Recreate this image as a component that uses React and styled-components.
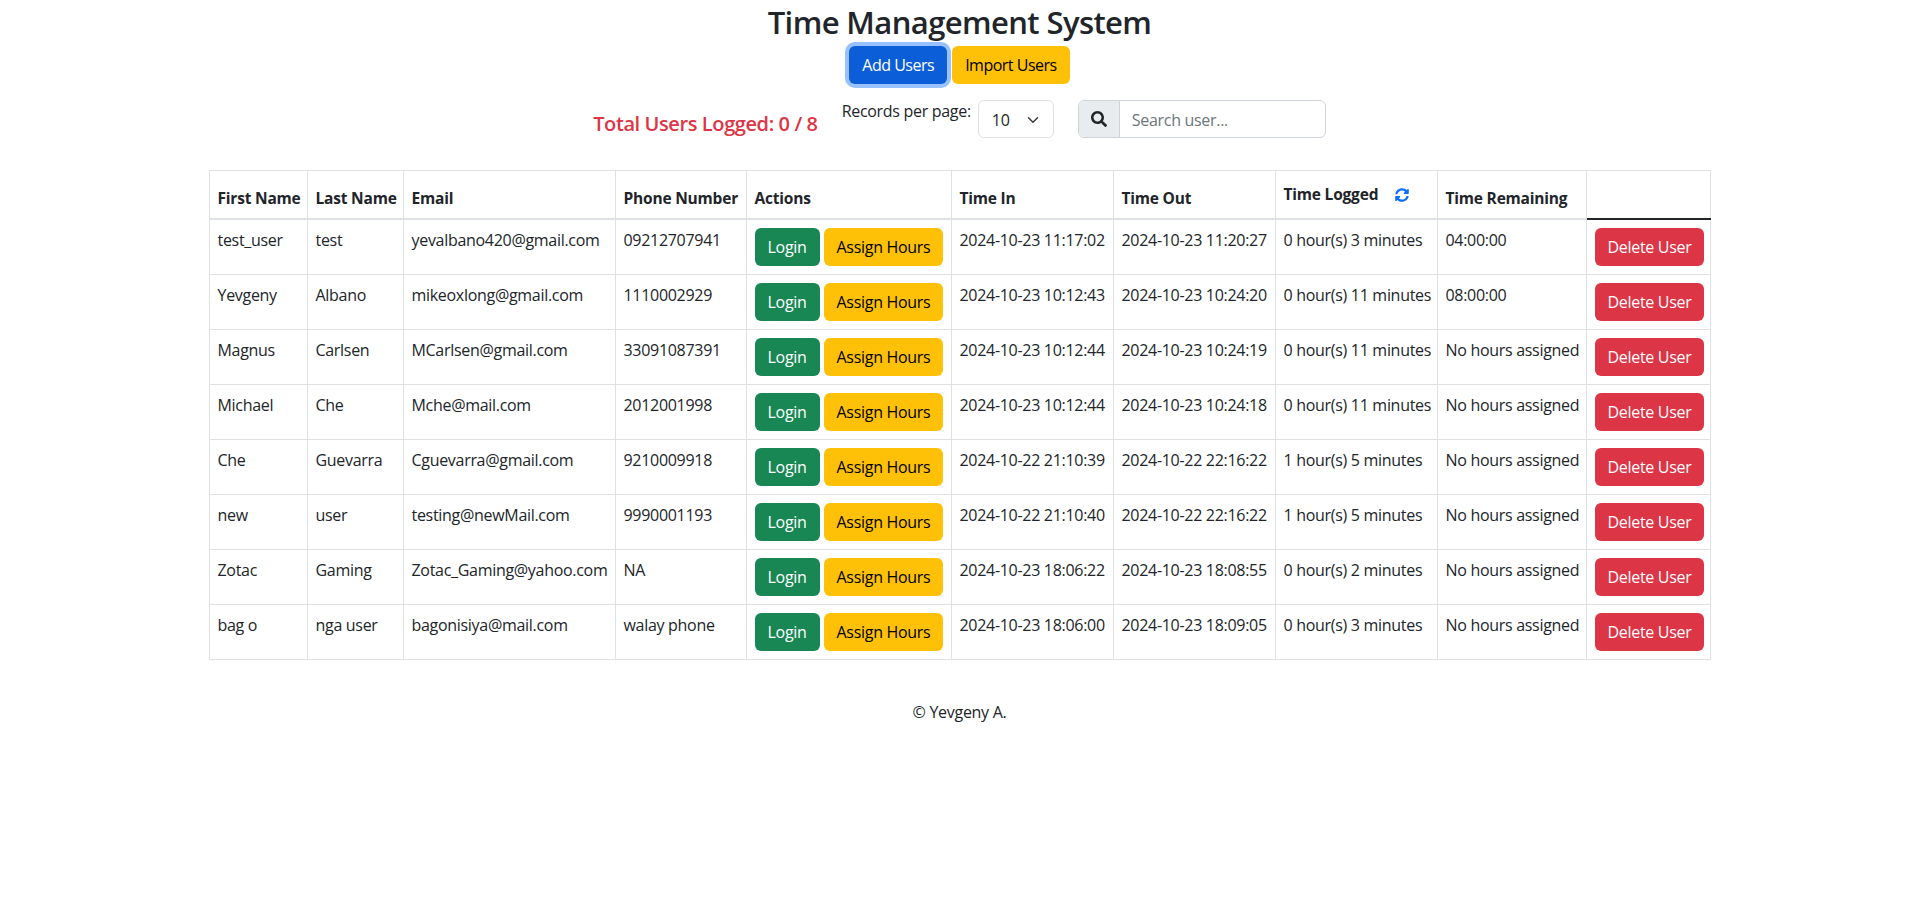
import React from "react";
import styled, { createGlobalStyle } from "styled-components";
import { FaSearch, FaSyncAlt } from "react-icons/fa";

const users = [
  ["test_user", "test", "yevalbano420@gmail.com", "09212707941", "2024-10-23 11:17:02", "2024-10-23 11:20:27", "0 hour(s) 3 minutes", "04:00:00"],
  ["Yevgeny", "Albano", "mikeoxlong@gmail.com", "1110002929", "2024-10-23 10:12:43", "2024-10-23 10:24:20", "0 hour(s) 11 minutes", "08:00:00"],
  ["Magnus", "Carlsen", "MCarlsen@gmail.com", "33091087391", "2024-10-23 10:12:44", "2024-10-23 10:24:19", "0 hour(s) 11 minutes", "No hours assigned"],
  ["Michael", "Che", "Mche@mail.com", "2012001998", "2024-10-23 10:12:44", "2024-10-23 10:24:18", "0 hour(s) 11 minutes", "No hours assigned"],
  ["Che", "Guevarra", "Cguevarra@gmail.com", "9210009918", "2024-10-22 21:10:39", "2024-10-22 22:16:22", "1 hour(s) 5 minutes", "No hours assigned"],
  ["new", "user", "testing@newMail.com", "9990001193", "2024-10-22 21:10:40", "2024-10-22 22:16:22", "1 hour(s) 5 minutes", "No hours assigned"],
  ["Zotac", "Gaming", "Zotac_Gaming@yahoo.com", "NA", "2024-10-23 18:06:22", "2024-10-23 18:08:55", "0 hour(s) 2 minutes", "No hours assigned"],
  ["bag o", "nga user", "bagonisiya@mail.com", "walay phone", "2024-10-23 18:06:00", "2024-10-23 18:09:05", "0 hour(s) 3 minutes", "No hours assigned"],
];

const colWidths = [98, 96, 212, 131, 205, 162, 162, 162, 149, 124];

const GlobalStyle = createGlobalStyle`
  body {
    margin: 0;
    background: #fff;
    color: #212529;
    font-family: "Open Sans", "Noto Sans", sans-serif;
    font-size: 16px;
    line-height: 24px;
    letter-spacing: -0.3px;
  }
`;

const Page = styled.div`
  display: flex;
  flex-direction: column;
  align-items: center;
`;

const Title = styled.h2`
  margin: 0;
  height: 46px;
  font-size: 31px;
  font-weight: 600;
  line-height: 44px;
  letter-spacing: -0.6px;
`;

const ButtonRow = styled.div`
  display: flex;
  gap: 5px;
  letter-spacing: -0.5px;
`;

const Button = styled.button`
  height: 38px;
  padding: 0 13px;
  border: 0;
  border-radius: 6px;
  font: inherit;
  letter-spacing: inherit;
  white-space: nowrap;
  color: ${(props) => (props.$tone === "warning" ? "#000" : "#fff")};
  background: ${(props) =>
    ({ primary: "#0b5ed7", warning: "#ffc107", success: "#198754", danger: "#dc3545" }[props.$tone])};
  box-shadow: ${(props) => (props.$focus ? "0 0 0 4px #98c1fe" : "none")};
`;

const Controls = styled.div`
  display: flex;
  align-items: flex-start;
  gap: 24px;
  margin-top: 16px;
`;

const TotalLogged = styled.div`
  margin-top: 9px;
  color: #dc3545;
  font-size: 20px;
  font-weight: 600;
  line-height: 30px;
  letter-spacing: -0.4px;
`;

const PerPage = styled.div`
  display: flex;
  align-items: flex-start;
  gap: 7px;
`;

const PerPageLabel = styled.span`
  line-height: 22px;
`;

const Select = styled.div`
  width: 76px;
  height: 38px;
  box-sizing: border-box;
  display: flex;
  align-items: center;
  justify-content: space-between;
  padding: 1px 12px 0 13px;
  border: 1px solid #dee2e6;
  border-radius: 6px;
`;

const SearchGroup = styled.div`
  display: flex;
  width: 248px;
  height: 38px;
  box-sizing: border-box;
  border: 1px solid #ced4da;
  border-radius: 6px;
  overflow: hidden;
`;

const SearchIcon = styled.div`
  width: 40px;
  display: flex;
  align-items: center;
  justify-content: center;
  background: #e9ecef;
  border-right: 1px solid #ced4da;
  color: #212529;
  font-size: 16px;
`;

const SearchInput = styled.div`
  padding: 1px 0 0 12px;
  line-height: 36px;
  color: #6c757d;
`;

const Table = styled.table`
  width: 1501px;
  margin-top: 31px;
  table-layout: fixed;
  border-collapse: collapse;
`;

const Th = styled.th`
  padding: 8px;
  border: 1px solid #dee2e6;
  border-bottom: 2px solid ${(props) => (props.$dark ? "#212529" : "#dee2e6")};
  font-size: 15.5px;
  font-weight: 700;
  letter-spacing: -0.2px;
  text-align: left;
  vertical-align: bottom;
  white-space: nowrap;
  overflow: hidden;
`;

const LoggedHead = styled.div`
  display: flex;
  align-items: flex-start;
  gap: 17px;
  height: 29px;
  padding-top: 3px;
  margin-bottom: -1px;
`;

const RefreshIcon = styled.span`
  display: flex;
  margin-top: 6px;
  color: #0d6efd;
  font-size: 14px;
`;

const Td = styled.td`
  padding: 8px;
  border: 1px solid #dee2e6;
  vertical-align: top;
  white-space: nowrap;
  overflow: hidden;
  height: 38px;
`;

const ActionGroup = styled.div`
  display: flex;
  gap: 4px;
`;

const Footer = styled.footer`
  margin-top: 40px;
`;

export default function App() {
  const heads = ["First Name", "Last Name", "Email", "Phone Number", "Actions", "Time In", "Time Out"];
  return (
    <>
      <GlobalStyle />
      <Page>
        <Title>Time Management System</Title>
        <ButtonRow>
          <Button $tone="primary" $focus>Add Users</Button>
          <Button $tone="warning">Import Users</Button>
        </ButtonRow>
        <Controls>
          <TotalLogged>Total Users Logged: 0 / 8</TotalLogged>
          <PerPage>
            <PerPageLabel>Records per page:</PerPageLabel>
            <Select>
              10
              <svg width="16" height="16" viewBox="0 0 16 16" fill="none">
                <path d="m2 5 6 6 6-6" stroke="#343a40" strokeWidth="2" strokeLinecap="round" strokeLinejoin="round" transform="translate(2 2) scale(.75)" />
              </svg>
            </Select>
          </PerPage>
          <SearchGroup>
            <SearchIcon><FaSearch /></SearchIcon>
            <SearchInput>Search user...</SearchInput>
          </SearchGroup>
        </Controls>
        <Table>
          <colgroup>
            {colWidths.map((w, i) => <col key={i} width={w} />)}
          </colgroup>
          <thead>
            <tr>
              {heads.map((h) => <Th key={h}>{h}</Th>)}
              <Th>
                <LoggedHead>
                  Time Logged
                  <RefreshIcon><FaSyncAlt /></RefreshIcon>
                </LoggedHead>
              </Th>
              <Th>Time Remaining</Th>
              <Th $dark />
            </tr>
          </thead>
          <tbody>
            {users.map((u) => (
              <tr key={u[2]}>
                {u.slice(0, 4).map((v, i) => <Td key={i}>{v}</Td>)}
                <Td>
                  <ActionGroup>
                    <Button $tone="success">Login</Button>
                    <Button $tone="warning">Assign Hours</Button>
                  </ActionGroup>
                </Td>
                {u.slice(4).map((v, i) => <Td key={i}>{v}</Td>)}
                <Td><Button $tone="danger">Delete User</Button></Td>
              </tr>
            ))}
          </tbody>
        </Table>
        <Footer>© Yevgeny A.</Footer>
      </Page>
    </>
  );
}
